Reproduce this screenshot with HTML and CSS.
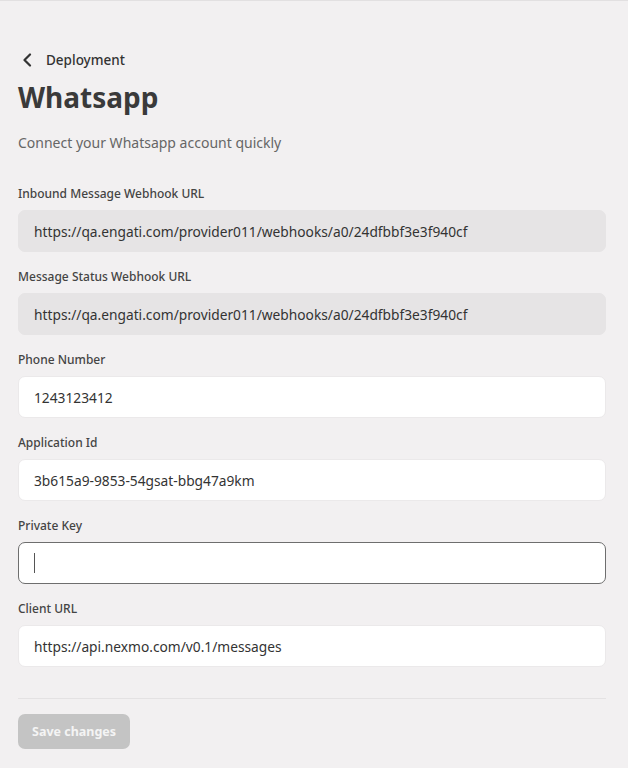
FILE: index.html
```html
<!DOCTYPE html>
<html lang="en">
<head>
    <meta charset="UTF-8">
    <meta name="viewport" content="width=device-width, initial-scale=1.0">
    <title>Whatsapp</title>
    <link rel="stylesheet" href="styles.css">
</head>
<body>
    <div class="page">
        <!-- Header -->
        <a class="back" href="#">
            <svg width="14" height="14" viewBox="0 0 14 14"><path d="M9 1.5 L3.5 7 L9 12.5" fill="none" stroke="#333" stroke-width="2.2" stroke-linecap="round" stroke-linejoin="round"/></svg>
            <span>Deployment</span>
        </a>
        <h1 class="title">Whatsapp</h1>
        <p class="subtitle">Connect your Whatsapp account quickly</p>

        <!-- Form -->
        <div class="form">
            <div class="field">
                <label class="label">Inbound Message Webhook URL</label>
                <div class="input disabled">https://qa.engati.com/provider011/webhooks/a0/24dfbbf3e3f940cf</div>
            </div>
            <div class="field">
                <label class="label">Message Status Webhook URL</label>
                <div class="input disabled">https://qa.engati.com/provider011/webhooks/a0/24dfbbf3e3f940cf</div>
            </div>
            <div class="field">
                <label class="label">Phone Number</label>
                <div class="input">1243123412</div>
            </div>
            <div class="field">
                <label class="label">Application Id</label>
                <div class="input">3b615a9-9853-54gsat-bbg47a9km</div>
            </div>
            <div class="field">
                <label class="label">Private Key</label>
                <div class="input focused"><span class="caret"></span></div>
            </div>
            <div class="field">
                <label class="label">Client URL</label>
                <div class="input">https://api.nexmo.com/v0.1/messages</div>
            </div>
        </div>

        <div class="footer">
            <button class="button save" disabled>Save changes</button>
        </div>
    </div>
</body>
</html>
```

FILE: styles.css
```css
body {
    margin: 0;
    font-family: "Noto Sans", Arial, sans-serif;
    color: #333;
    background: #f2f0f1;
    border-top: 1px solid #e2e0e1;
}
.page {
    padding: 47px 22px 0 18px;
}
.back {
    display: flex;
    align-items: center;
    gap: 11px;
    height: 24px;
    padding-left: 3px;
    text-decoration: none;
    color: #333;
    font-size: 13.5px;
    font-weight: 500;
}
.title {
    margin: 7px 0 0;
    font-size: 28px;
    line-height: 36px;
    font-weight: 700;
    color: #3a3a3a;
}
.subtitle {
    margin: 18px 0 0;
    font-size: 14px;
    line-height: 20px;
    color: #666;
}
.form {
    margin-top: 33px;
}
.field {
    margin-bottom: 17px;
}
.label {
    display: block;
    font-size: 12px;
    line-height: 16px;
    font-weight: 500;
    color: #444;
    margin-bottom: 8px;
}
.input {
    box-sizing: border-box;
    height: 42px;
    display: flex;
    align-items: center;
    padding: 0 15px;
    border-radius: 7px;
    background: #fff;
    border: 1px solid #ebe9ea;
    font-size: 13.75px;
    color: #333;
}
.input.disabled {
    background: #e6e4e5;
    border-color: #e6e4e5;
}
.input.focused {
    border-color: #6e6e6e;
}
.caret {
    width: 1px;
    height: 20px;
    background: #555;
}
.footer {
    margin-top: 31px;
    padding-top: 15px;
    border-top: 1px solid #e4e2e3;
}
.button {
    height: 35px;
    padding: 0 14px;
    border: none;
    border-radius: 7px;
    font-family: inherit;
    font-size: 12.5px;
    font-weight: 700;
    color: #f4f4f4;
}
.button.save {
    background: #c4c4c4;
}
```
